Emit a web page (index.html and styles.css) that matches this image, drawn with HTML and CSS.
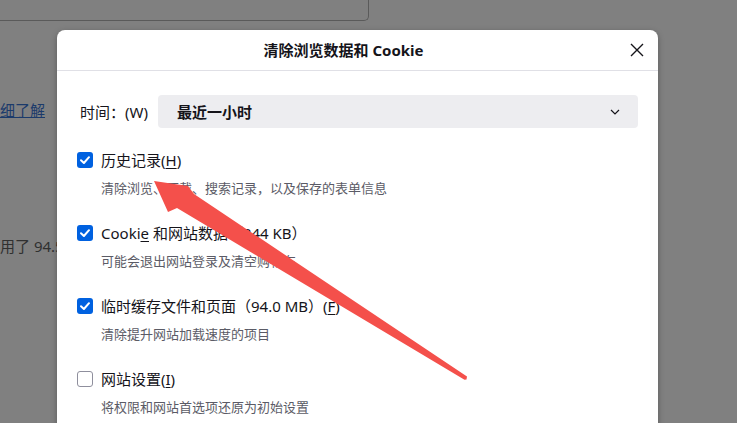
FILE: index.html
```html
<!DOCTYPE html>
<html lang="zh-CN">
<head>
<meta charset="utf-8">
<title>清除浏览数据和 Cookie</title>
<link rel="stylesheet" href="styles.css">
</head>
<body>
<div class="page">
  <div class="topbox"></div>
  <a class="learn" href="#">细了解</a>
  <p class="used">用了 94.5 MB</p>
</div>

<div class="dialog">
  <header class="dlg-head">
    <h1 class="dlg-title">清除浏览数据和 Cookie</h1>
    <button class="close" aria-label="关闭">
      <svg width="14" height="14" viewBox="0 0 14 14"><path d="M1 1 L13 13 M13 1 L1 13" stroke="#15141a" stroke-width="1.4" fill="none"/></svg>
    </button>
  </header>
  <div class="dlg-body">
    <div class="range">
      <span class="range-label">时间：(W)</span>
      <div class="select">
        <span>最近一小时</span>
        <svg width="10" height="6" viewBox="0 0 10 6"><path d="M1 1 L5 5 L9 1" stroke="#15141a" stroke-width="1.2" fill="none"/></svg>
      </div>
    </div>
    <ul class="items">
      <li class="item">
        <div class="item-row">
          <span class="cb on"><svg width="16" height="16" viewBox="0 0 16 16"><path d="M4 8.3 L6.9 11 L12 5.2" stroke="#fff" stroke-width="2" fill="none" stroke-linecap="round" stroke-linejoin="round"/></svg></span>
          <span class="lbl">历史记录(<u>H</u>)</span>
        </div>
        <p class="desc">清除浏览、下载、搜索记录，以及保存的表单信息</p>
      </li>
      <li class="item">
        <div class="item-row">
          <span class="cb on"><svg width="16" height="16" viewBox="0 0 16 16"><path d="M4 8.3 L6.9 11 L12 5.2" stroke="#fff" stroke-width="2" fill="none" stroke-linecap="round" stroke-linejoin="round"/></svg></span>
          <span class="lbl">Cooki<u>e</u> 和网站数据（344 KB）</span>
        </div>
        <p class="desc">可能会退出网站登录及清空购物车</p>
      </li>
      <li class="item">
        <div class="item-row">
          <span class="cb on"><svg width="16" height="16" viewBox="0 0 16 16"><path d="M4 8.3 L6.9 11 L12 5.2" stroke="#fff" stroke-width="2" fill="none" stroke-linecap="round" stroke-linejoin="round"/></svg></span>
          <span class="lbl">临时缓存文件和页面（94.0 MB）(<u>F</u>)</span>
        </div>
        <p class="desc">清除提升网站加载速度的项目</p>
      </li>
      <li class="item">
        <div class="item-row">
          <span class="cb"></span>
          <span class="lbl">网站设置(<u>I</u>)</span>
        </div>
        <p class="desc">将权限和网站首选项还原为初始设置</p>
      </li>
    </ul>
  </div>
</div>

<svg class="arrow" width="737" height="423" viewBox="0 0 737 423">
  <polygon fill="#f4504b" points="154,181 188,186 194,194 467,376.5 466.5,379.5 464.5,379.8 177,208 168,212"/>
</svg>
</body>
</html>
```

FILE: styles.css
```css
* { box-sizing: border-box; }

html, body {
  margin: 0;
  padding: 0;
}

body {
  width: 737px;
  height: 423px;
  overflow: hidden;
  position: relative;
  background: #808080;
  font-family: "Noto Sans", "Noto Sans CJK SC", sans-serif;
  color: #15141a;
}

.page {
  display: flex;
  flex-direction: column;
  align-items: flex-start;
}

.topbox {
  width: 369px;
  height: 21px;
  border-right: 1px solid #5a5a5a;
  border-bottom: 1px solid #5a5a5a;
  border-bottom-right-radius: 5px;
}

.learn {
  margin-top: 79px;
  font-size: 15px;
  line-height: 20px;
  color: #1b3a6b;
  text-decoration: underline;
  font-family: "Noto Sans CJK SC", sans-serif;
}

.used {
  margin: 116px 0 0;
  font-size: 15px;
  line-height: 20px;
  color: #303030;
  white-space: nowrap;
}

.dialog {
  position: absolute;
  left: 57px;
  top: 30px;
  width: 601px;
  height: 420px;
  background: #fff;
  border-radius: 8px;
  box-shadow: 0 2px 6px rgba(0, 0, 0, 0.3);
}

.dlg-head {
  height: 41px;
  display: flex;
  align-items: center;
  padding: 0 7px;
  border-bottom: 1px solid #e0e0e6;
}

.dlg-title {
  flex: 1;
  margin: 0;
  text-align: center;
  font-size: 15px;
  line-height: 20px;
  font-weight: 700;
}

.close {
  width: 28px;
  height: 28px;
  padding: 0;
  border: 0;
  background: none;
  display: flex;
  align-items: center;
  justify-content: center;
}

.dlg-body {
  padding: 0 20px;
}

.range {
  margin-top: 24px;
  height: 33px;
  display: flex;
  align-items: center;
}

.range-label {
  width: 81px;
  padding-left: 3px;
  font-size: 15px;
  line-height: 20px;
  white-space: nowrap;
}

.select {
  flex: 1;
  height: 33px;
  border-radius: 4px;
  background: #ededf0;
  display: flex;
  align-items: center;
  justify-content: space-between;
  padding: 0 18px 0 19px;
  font-size: 15px;
  font-weight: 700;
}

.items {
  list-style: none;
  margin: 20px 0 0;
  padding: 0;
  display: flex;
  flex-direction: column;
  gap: 21px;
}

.item-row {
  display: flex;
  align-items: center;
  gap: 8px;
  height: 24px;
}

.cb {
  width: 16px;
  height: 16px;
  border-radius: 3px;
  border: 1.5px solid #8f8f9d;
  background: #fff;
  display: flex;
  flex: none;
}

.cb.on {
  border: 0;
  background: #0061e0;
}

.lbl {
  font-size: 15px;
  line-height: 24px;
  white-space: nowrap;
}

.lbl u {
  text-underline-offset: 2px;
}

.desc {
  margin: 4px 0 0;
  padding-left: 24px;
  font-size: 13px;
  line-height: 24px;
  color: #5b5b66;
  white-space: nowrap;
}

.arrow {
  position: absolute;
  left: 0;
  top: 0;
  pointer-events: none;
}
```
